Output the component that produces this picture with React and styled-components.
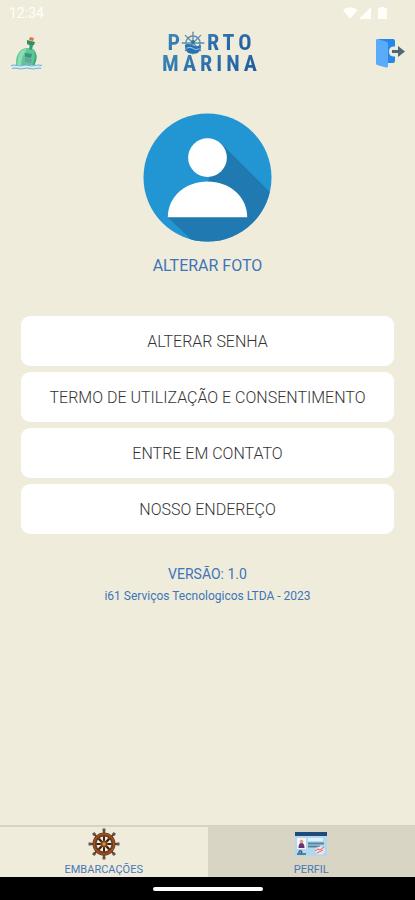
import React from "react";
import styled, { createGlobalStyle } from "styled-components";

const GlobalStyle = createGlobalStyle`
  * {
    box-sizing: border-box;
  }
  body {
    margin: 0;
    background: #efecdb;
    font-family: Roboto, "Liberation Sans", sans-serif;
  }
  button {
    font-family: inherit;
  }
`;

const Screen = styled.div`
  display: flex;
  flex-direction: column;
  min-height: 100vh;
`;

const StatusBar = styled.div`
  display: flex;
  align-items: center;
  justify-content: space-between;
  height: 26px;
  padding: 0 26px 0 9px;
  color: #fffef8;
  font-size: 14px;
  line-height: 26px;
`;

const StatusIcons = styled.svg`
  display: block;
  width: 46px;
  height: 14px;
`;

const Header = styled.header`
  display: flex;
  align-items: center;
  justify-content: space-between;
  height: 54px;
  padding: 0 10px;
`;

const IconButton = styled.button`
  display: block;
  padding: 0;
  border: 0;
  background: none;
  line-height: 0;
  cursor: pointer;
`;

const Logo = styled.h1`
  display: flex;
  flex-direction: column;
  align-items: center;
  margin: 0;
  padding-left: 4px;
  font-family: "Roboto Condensed", "Liberation Sans Narrow", Roboto, sans-serif;
  font-size: 22px;
  font-weight: 700;
  line-height: 21px;
  letter-spacing: 4px;
`;

const LogoLine = styled.span`
  display: flex;
  align-items: center;
  height: 21px;
  color: transparent;
  background: linear-gradient(160deg, #3c86b4 10%, #2b6fae 50%, #1f5a9f 90%);
  background-clip: text;
`;

const Wheel = styled.svg`
  width: 26px;
  height: 26px;
  margin: 0 1px 0 -4px;
`;

const Main = styled.main`
  flex: 1;
  display: flex;
  flex-direction: column;
  align-items: center;
  padding: 33px 21px 24px;
`;

const PhotoButton = styled.button`
  display: flex;
  flex-direction: column;
  align-items: center;
  gap: 13px;
  padding: 0;
  border: 0;
  background: none;
  color: #3f74b9;
  font-size: 16px;
  line-height: 22px;
  cursor: pointer;
`;

const Menu = styled.nav`
  display: flex;
  flex-direction: column;
  gap: 6px;
  width: 100%;
  margin-top: 39px;
`;

const MenuButton = styled.button`
  height: 50px;
  border: 0;
  border-radius: 9px;
  background: #fff;
  color: #333;
  font-size: 16px;
  font-weight: 300;
  cursor: pointer;
`;

const Version = styled.p`
  margin: 29px 0 0;
  color: #3f74b9;
  font-size: 14px;
  line-height: 22px;
`;

const Company = styled.p`
  margin: 0;
  color: #3f74b9;
  font-size: 12px;
  line-height: 22px;
`;

const TabBar = styled.nav`
  display: flex;
  border-top: 2px solid #d6d3c3;
`;

const Tab = styled.a`
  flex: 1;
  display: flex;
  flex-direction: column;
  align-items: center;
  gap: 2px;
  height: 50px;
  padding-top: 1px;
  background: ${(props) => (props.$active ? "#d9d5c4" : "#efecdb")};
  color: #4a78b8;
  font-size: 11px;
  line-height: 15px;
  text-decoration: none;
`;

const SystemBar = styled.div`
  display: flex;
  align-items: center;
  justify-content: center;
  height: 23px;
  background: #000;
`;

const HomeHandle = styled.div`
  width: 110px;
  height: 4px;
  border-radius: 2px;
  background: #fff;
`;

const menu = [
  "ALTERAR SENHA",
  "TERMO DE UTILIZAÇÃO E CONSENTIMENTO",
  "ENTRE EM CONTATO",
  "NOSSO ENDEREÇO",
];

const spokes = [0, 45, 90, 135, 180, 225, 270, 315];

function SignalIcons() {
  return (
    <StatusIcons viewBox="0 0 46 14" fill="#fffef8" aria-hidden="true">
      <path d="M0 4.500C4 .2 10.500 .2 14.500 4.500L7.200 12.500Z" />
      <path d="M28 1v12H16Z" />
      <path d="M35 3.500q0-1.500 1.500-1.500h1V1h4v1h1q1.500 0 1.500 1.500v9.500h-9Z" />
    </StatusIcons>
  );
}

function BottleIcon() {
  return (
    <svg width="34" height="34" viewBox="0 0 34 34" aria-hidden="true">
      <path
        d="M17 12l6 1c3 2 4 6 3 10l-2 7H6c0-5 0-9 2-12 2-4 5-6 9-6Z"
        fill="#5cc795"
      />
      <path d="M17 13c-5 0-8 3-9 9l-1 8h4c0-6 2-12 6-17Z" fill="#8edcb3" />
      <path d="M15 17l7 1-1 4-6-1Z" fill="#38967a" />
      <path d="M15 22l7 1-1 4-6-1Z" fill="#6d9fa0" />
      <path d="M24 15c2 5 0 11-2 15h2c3-6 4-11 0-15Z" fill="#3ea67d" />
      <path d="M17 4l8 2-1 3-3 1-4-2Z" fill="#328e68" />
      <path d="M20 8l3 1-1 5-3-1Z" fill="#3a9c74" />
      <path d="M20 1l4 1-1 3-4-1Z" fill="#d97842" />
      <path d="M1 29h31v4H1Z" fill="#d7edf7" />
      <path
        d="M1 29.500q3-1 6 0t6 0 6 0 6 0 7 0M2 32.500q3-1 6 0t6 0 6 0 6 0 5 0"
        fill="none"
        stroke="#6faed0"
      />
    </svg>
  );
}

function LogoWheel() {
  return (
    <Wheel viewBox="1 -1 24 24" aria-hidden="true">
      <g stroke="#5c8fae" strokeLinecap="round" fill="none">
        <circle cx="13" cy="11" r="6.500" strokeWidth="1.400" />
        {spokes.map((a) => (
          <path
            key={a}
            d="M13 11V1"
            strokeWidth="1.200"
            transform={`rotate(${a} 13 11)`}
          />
        ))}
      </g>
      <path d="M5.500 13q3-2 7 0t8 0q0 8-7.500 8t-7.500-8Z" fill="#2672b2" />
      <path d="M7 16q3-2 6 0t6 0" stroke="#8fc0d8" fill="none" />
      <circle cx="13" cy="10" r="1.800" fill="#35739f" />
    </Wheel>
  );
}

function ExitIcon() {
  return (
    <svg width="30" height="32" viewBox="0 0 30 32" aria-hidden="true">
      <path d="M2 2h16q2 0 2 2v20q0 2-2 2H2Z" fill="#2588e8" />
      <path d="M1 3q0-1 2-1l9 3q1 .5 1 2v22q0 2-2 1.500L2 28q-1-.5-1-2Z" fill="#5aabfa" />
      <path d="M20 9.500h-1q-5 0-5 5t5 5h1Z" fill="#efecdb" />
      <path d="M17 13h6V9l7 5.500-7 5.500v-4h-6Z" fill="#4c6876" />
    </svg>
  );
}

function Avatar() {
  return (
    <svg width="129" height="129" viewBox="0 0 130 130" aria-hidden="true">
      <defs>
        <clipPath id="disc">
          <circle cx="65" cy="65" r="64.500" />
        </clipPath>
      </defs>
      <g clipPath="url(#disc)">
        <rect width="130" height="130" fill="#2196d3" />
        <path d="M80 32L130 82V130H51L25 105L65 70Z" fill="#2079b1" />
      </g>
      <circle cx="65" cy="45" r="19.500" fill="#fff" />
      <path d="M25 105C25 84 43 69 65 69s40 15 40 36Z" fill="#fff" />
    </svg>
  );
}

function HelmIcon() {
  return (
    <svg width="32" height="32" viewBox="0 0 32 32" aria-hidden="true">
      {spokes.map((a) => (
        <g key={a} transform={`rotate(${a} 16 16)`}>
          <path d="M16 16V2" stroke="#68391f" strokeWidth="2" />
          <path d="M14.500 .5h3v3h-3Z" fill="#65584a" />
        </g>
      ))}
      <circle cx="16" cy="16" r="9.500" fill="none" stroke="#713819" strokeWidth="4" />
      <circle cx="16" cy="16" r="10" fill="none" stroke="#9b552b" strokeWidth="1.500" />
      {spokes.map((a) => (
        <path
          key={a}
          d="M15 9h2v3h-2Z"
          fill="#332318"
          transform={`rotate(${a} 16 16)`}
        />
      ))}
      <circle cx="16" cy="16" r="3.500" fill="#7a421f" />
      <circle cx="16" cy="16" r="1.800" fill="#d59637" />
    </svg>
  );
}

function CardIcon() {
  return (
    <svg width="32" height="32" viewBox="0 0 32 32" aria-hidden="true">
      <path d="M0 4h32v24H0Z" fill="#b2d8ef" />
      <path d="M0 4h32v4H0Z" fill="#1e4b78" />
      <path d="M2 10h9v11H2Z" fill="#f6f2f5" />
      <path d="M3.500 20q0-5 3-5t3 5Z" fill="#643477" />
      <circle cx="6.500" cy="13.500" r="1.800" fill="#e69d78" />
      <path d="M13 10h15v3H13Z" fill="#e1f0f8" />
      <path d="M13 14.500h16v2H13ZM13 17.500h12v2H13Z" fill="#57819f" />
      <path d="M2 26h9M4 25q0-3 2-2t-1 3" stroke="#3d6686" strokeWidth="1.500" fill="none" />
      <ellipse cx="25" cy="22.500" rx="5" ry="4" fill="#f4e1e4" />
      <path d="M20 23l3-2 2 1 4-3M22 25l6-3" stroke="#cf6874" fill="none" />
    </svg>
  );
}

function App() {
  return (
    <>
      <GlobalStyle />
      <Screen>
        <StatusBar>
          <span>12:34</span>
          <SignalIcons />
        </StatusBar>
        <Header>
          <BottleIcon />
          <Logo>
            <LogoLine>
              P<LogoWheel />
              RTO
            </LogoLine>
            <LogoLine>MARINA</LogoLine>
          </Logo>
          <IconButton type="button" aria-label="Sair">
            <ExitIcon />
          </IconButton>
        </Header>
        <Main>
          <PhotoButton type="button">
            <Avatar />
            ALTERAR FOTO
          </PhotoButton>
          <Menu>
            {menu.map((label) => (
              <MenuButton key={label} type="button">
                {label}
              </MenuButton>
            ))}
          </Menu>
          <Version>VERSÃO: 1.0</Version>
          <Company>i61 Serviços Tecnologicos LTDA - 2023</Company>
        </Main>
        <TabBar>
          <Tab href="#embarcacoes">
            <HelmIcon />
            EMBARCAÇÕES
          </Tab>
          <Tab href="#perfil" $active aria-current="page">
            <CardIcon />
            PERFIL
          </Tab>
        </TabBar>
        <SystemBar>
          <HomeHandle />
        </SystemBar>
      </Screen>
    </>
  );
}

export default App;
